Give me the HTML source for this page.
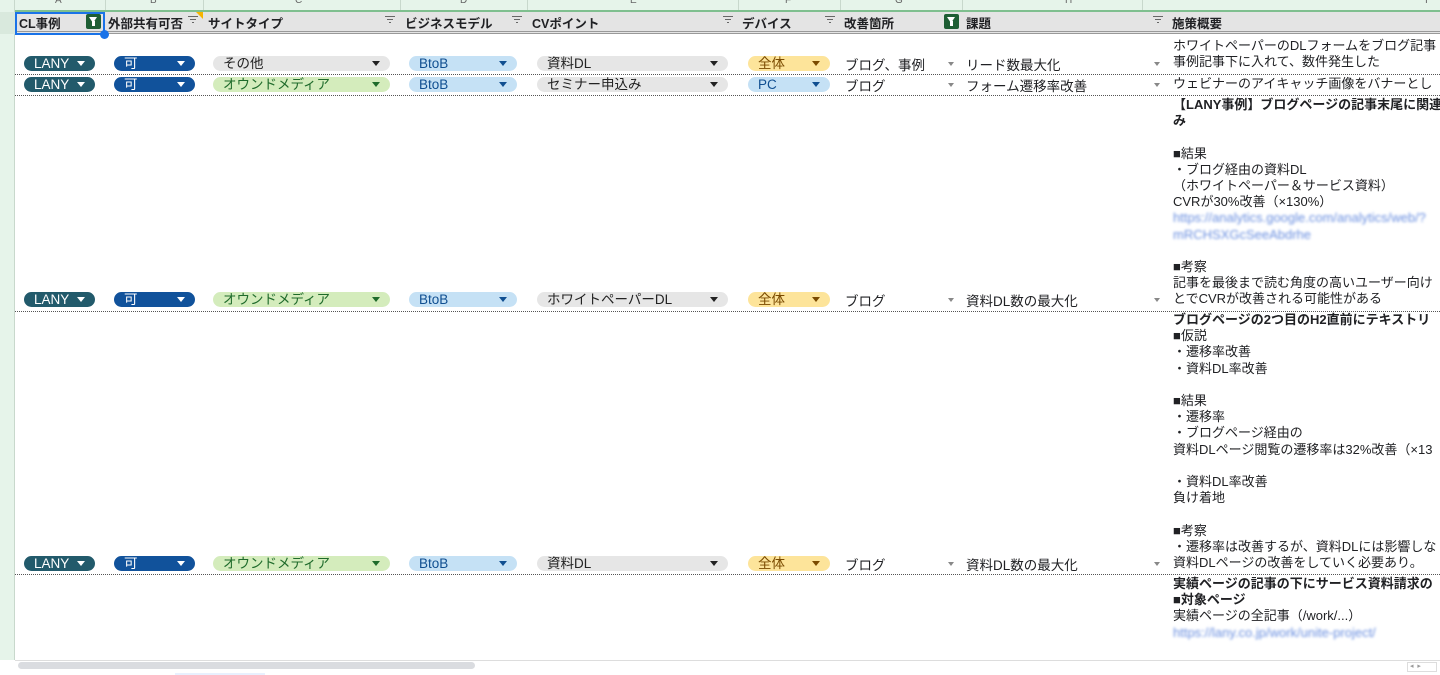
<!DOCTYPE html>
<html><head><meta charset="utf-8"><style>
*{margin:0;padding:0;box-sizing:border-box}
body{width:1440px;height:675px;overflow:hidden;background:#fff;position:relative;font-family:"Liberation Sans","Noto Sans CJK JP",sans-serif;font-size:13px;color:#202124}
.a{position:absolute}
.rh{left:0;top:0;width:15px;height:660px;background:#e6f4ea;border-right:1px solid #c8d8cc}
.ch{left:15px;top:0;width:1425px;height:12px;background:#e6f4ea;border-bottom:2px solid #7fbf8f;overflow:hidden}
.ch span{position:absolute;top:-5px;font-size:10px;color:#666}
.ch i{position:absolute;top:0;height:12px;border-left:1px solid #c8d8cc}
.hdr{left:15px;top:12px;width:1425px;height:22px;background:#e4e4e4;border-bottom:3px double #999;font-weight:bold;font-size:12.5px}
.hdr span{position:absolute;top:1px}
.fl{position:absolute;top:4px;width:10px;height:8px;border-top:1.5px solid #666}
.fl:before{content:"";position:absolute;left:2px;top:2px;width:6px;border-top:1.5px solid #666}
.fl:after{content:"";position:absolute;left:4px;top:5px;width:2px;border-top:1.5px solid #666}
.ff{position:absolute;top:2px;width:15px;height:15px;background:#1e5e34;border-radius:2px}
.ff:after{content:"";position:absolute;left:3px;top:3px;border-left:4.5px solid transparent;border-right:4.5px solid transparent;border-top:6px solid #fff}
.ff:before{content:"";position:absolute;left:6px;top:7px;width:3px;height:5px;background:#fff}
.line{left:15px;width:1425px;border-top:1px dotted #555;height:0}
.chip{position:absolute;height:15px;border-radius:8px;padding-left:10px;line-height:15px;font-size:13.5px}
.chip:after{content:"";position:absolute;right:10px;top:5px;border-left:4px solid transparent;border-right:4px solid transparent;border-top:5px solid currentColor}
.lany{background:#225a6b;color:#fff}
.ka{background:#11529b;color:#fff}
.gr{background:#e6e6e6;color:#222}
.gn{background:#d4ecbc;color:#1f6b2b}
.bl{background:#c5e1f5;color:#104f91}
.yl{background:#fde49a;color:#7a4a00}
.t{position:absolute;white-space:nowrap;font-size:13.5px}
.dd{position:absolute;border-left:3.5px solid transparent;border-right:3.5px solid transparent;border-top:4px solid #888}
.itx{position:absolute;left:1173px;white-space:nowrap;line-height:16.2px;font-size:13px}
.lk{color:#6a8fe0;filter:blur(1.3px)}
</style></head><body>
<div class="a rh"></div>
<div class="a ch">
<span style="left:40px">A</span><i style="left:90px"></i><span style="left:135px">B</span><i style="left:188px"></i><span style="left:280px">C</span><i style="left:385px"></i><span style="left:445px">D</span><i style="left:512px"></i><span style="left:615px">E</span><i style="left:723px"></i><span style="left:770px">F</span><i style="left:825px"></i><span style="left:880px">G</span><i style="left:947px"></i><span style="left:1050px">H</span><i style="left:1127px"></i><span style="left:1410px">I</span>
</div>
<div class="a" style="left:0;top:12px;width:15px;height:22px;background:#d9e9dd"></div>
<div class="a hdr">
<span style="left:4px">CL事例</span><div class="ff" style="left:71px"></div>
<span style="left:93px">外部共有可否</span><div class="fl" style="left:173px"></div>
<span style="left:193px">サイトタイプ</span><div class="fl" style="left:370px"></div>
<span style="left:390px">ビジネスモデル</span><div class="fl" style="left:497px"></div>
<span style="left:517px">CVポイント</span><div class="fl" style="left:708px"></div>
<span style="left:727px">デバイス</span><div class="fl" style="left:810px"></div>
<span style="left:829px">改善箇所</span><div class="ff" style="left:929px"></div>
<span style="left:951px">課題</span><div class="fl" style="left:1138px"></div>
<span style="left:1157px">施策概要</span>
</div>
<div class="a" style="left:15px;top:12px;width:90px;height:23px;border:2px solid #1a73e8"></div>
<div class="a" style="left:100px;top:30px;width:9px;height:9px;border-radius:50%;background:#1a73e8"></div>
<div class="a" style="left:196px;top:12px;border-left:7px solid transparent;border-top:7px solid #f6b400"></div>

<div class="a line" style="top:74px"></div>
<div class="a line" style="top:95px"></div>
<div class="a line" style="top:311px"></div>
<div class="a line" style="top:574px"></div>

<div class="chip lany" style="left:24px;width:71px;top:56px">LANY</div>
<div class="chip ka" style="left:114px;width:81px;top:56px">可</div>
<div class="chip gr" style="left:213px;width:177px;top:56px">その他</div>
<div class="chip bl" style="left:409px;width:108px;top:56px">BtoB</div>
<div class="chip gr" style="left:537px;width:191px;top:56px">資料DL</div>
<div class="chip yl" style="left:748px;width:82px;top:56px">全体</div>
<div class="t" style="left:845px;top:54px">ブログ、事例</div><div class="dd" style="left:948px;top:62px"></div>
<div class="t" style="left:966px;top:54px">リード数最大化</div><div class="dd" style="left:1154px;top:62px"></div>
<div class="itx" style="top:38px">ホワイトペーパーのDLフォームをブログ記事<br>事例記事下に入れて、数件発生した</div>

<div class="chip lany" style="left:24px;width:71px;top:77px">LANY</div>
<div class="chip ka" style="left:114px;width:81px;top:77px">可</div>
<div class="chip gn" style="left:213px;width:177px;top:77px">オウンドメディア</div>
<div class="chip bl" style="left:409px;width:108px;top:77px">BtoB</div>
<div class="chip gr" style="left:537px;width:191px;top:77px">セミナー申込み</div>
<div class="chip bl" style="left:748px;width:82px;top:77px">PC</div>
<div class="t" style="left:845px;top:75px">ブログ</div><div class="dd" style="left:948px;top:83px"></div>
<div class="t" style="left:966px;top:75px">フォーム遷移率改善</div><div class="dd" style="left:1154px;top:83px"></div>
<div class="itx" style="top:76px">ウェビナーのアイキャッチ画像をバナーとし</div>

<div class="chip lany" style="left:24px;width:71px;top:292px">LANY</div>
<div class="chip ka" style="left:114px;width:81px;top:292px">可</div>
<div class="chip gn" style="left:213px;width:177px;top:292px">オウンドメディア</div>
<div class="chip bl" style="left:409px;width:108px;top:292px">BtoB</div>
<div class="chip gr" style="left:537px;width:191px;top:292px">ホワイトペーパーDL</div>
<div class="chip yl" style="left:748px;width:82px;top:292px">全体</div>
<div class="t" style="left:845px;top:290px">ブログ</div><div class="dd" style="left:948px;top:298px"></div>
<div class="t" style="left:966px;top:290px">資料DL数の最大化</div><div class="dd" style="left:1154px;top:298px"></div>
<div class="itx" style="top:97px"><b>【LANY事例】ブログページの記事末尾に関連</b><br><b>み</b><br><br>■結果<br>・ブログ経由の資料DL<br>（ホワイトペーパー＆サービス資料）<br>CVRが30%改善（×130%）<br><span class="lk">https://analytics.google.com/analytics/web/?</span><br><span class="lk">mRCHSXGcSeeAbdrhe</span><br><br>■考察<br>記事を最後まで読む角度の高いユーザー向け<br>とでCVRが改善される可能性がある</div>

<div class="chip lany" style="left:24px;width:71px;top:556px">LANY</div>
<div class="chip ka" style="left:114px;width:81px;top:556px">可</div>
<div class="chip gn" style="left:213px;width:177px;top:556px">オウンドメディア</div>
<div class="chip bl" style="left:409px;width:108px;top:556px">BtoB</div>
<div class="chip gr" style="left:537px;width:191px;top:556px">資料DL</div>
<div class="chip yl" style="left:748px;width:82px;top:556px">全体</div>
<div class="t" style="left:845px;top:554px">ブログ</div><div class="dd" style="left:948px;top:562px"></div>
<div class="t" style="left:966px;top:554px">資料DL数の最大化</div><div class="dd" style="left:1154px;top:562px"></div>
<div class="itx" style="top:312px"><b>ブログページの2つ目のH2直前にテキストリ</b><br>■仮説<br>・遷移率改善<br>・資料DL率改善<br><br>■結果<br>・遷移率<br>・ブログページ経由の<br>資料DLページ閲覧の遷移率は32%改善（×13<br><br>・資料DL率改善<br>負け着地<br><br>■考察<br>・遷移率は改善するが、資料DLには影響しな<br>資料DLページの改善をしていく必要あり。</div>

<div class="itx" style="top:576px"><b>実績ページの記事の下にサービス資料請求の</b><br><b>■対象ページ</b><br>実績ページの全記事（/work/...）<br><span class="lk">https://lany.co.jp/work/unite-project/</span></div>
<div class="a" style="left:15px;top:660px;width:1425px;height:15px;background:#fff;border-top:1px solid #ddd;z-index:2"></div>
<div class="a" style="left:18px;top:662px;width:457px;height:7px;border-radius:4px;background:#dadce0;z-index:3"></div>
<div class="a" style="left:175px;top:673px;width:90px;height:2px;background:#e8f0fe;z-index:3"></div>
<div class="a" style="left:1407px;top:662px;width:30px;height:10px;border:1px solid #ddd;z-index:3;font-size:7px;color:#999;line-height:8px">&nbsp;◂ &nbsp;▸</div>
</body></html>
